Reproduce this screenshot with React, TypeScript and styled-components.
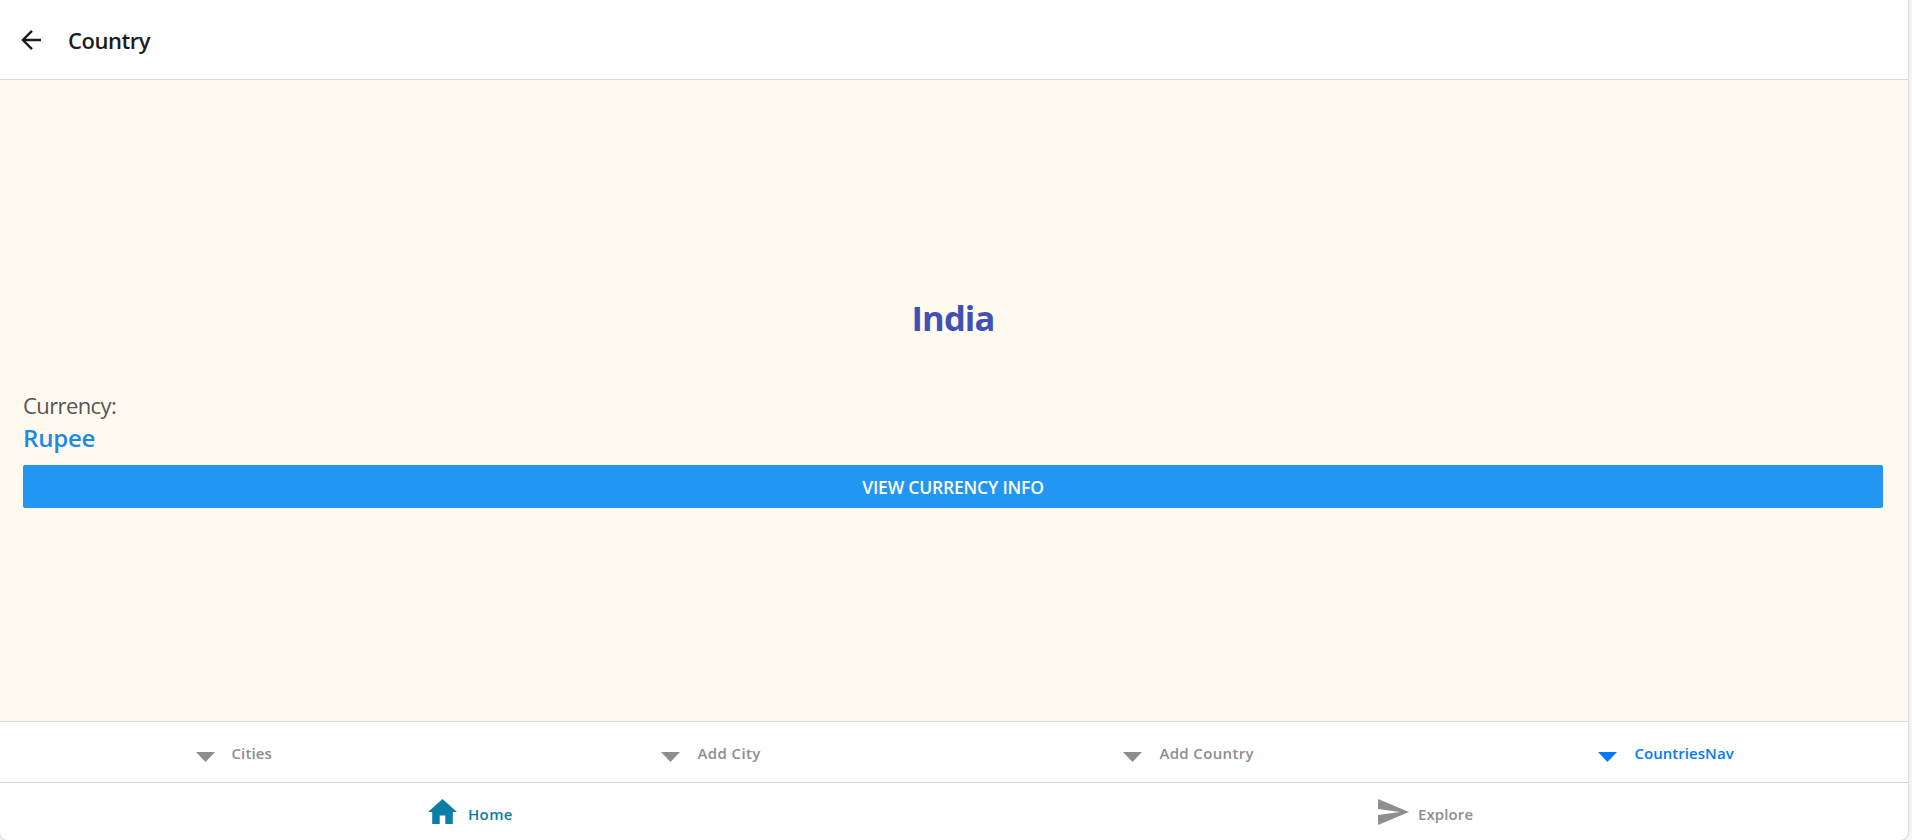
import React from "react";
import styled, { createGlobalStyle } from "styled-components";

const GlobalStyle = createGlobalStyle`
  * { box-sizing: border-box; }
  body { margin: 0; background: #f6f6f6; font-family: "Open Sans", "Noto Sans", sans-serif; overflow: hidden; }
`;

const Page = styled.div`
  display: flex;
  flex-direction: column;
  width: 1908px;
  height: 840px;
  background: #fff;
  border-radius: 0 0 8px 8px;
  box-shadow: 0 0 3px rgba(0, 0, 0, 0.25);
  overflow: hidden;
`;

const Header = styled.header`
  display: flex;
  align-items: center;
  height: 80px;
  padding-left: 19px;
  border-bottom: 1px solid #d8d8d8;
`;

const BackButton = styled.button`
  display: flex;
  width: 24px;
  height: 24px;
  margin: 1px 25px 0 0;
  padding: 0;
  border: 0;
  background: none;
  color: #1c1c1e;
`;

const Title = styled.h1`
  margin: 1px 0 0;
  font-size: 22px;
  line-height: 30px;
  font-weight: 600;
  letter-spacing: -0.45px;
  color: #1c1c1e;
`;

const Content = styled.main`
  display: flex;
  flex-direction: column;
  height: 641px;
  padding: 214px 25px 0 23px;
  background: #fffaf0;
`;

const CountryName = styled.h2`
  margin: 0 0 47px;
  font-size: 34.5px;
  line-height: 48px;
  font-weight: 700;
  letter-spacing: -0.9px;
  text-align: center;
  color: #3f51b5;
`;

const Caption = styled.div`
  height: 32px;
  font-size: 22px;
  line-height: 32px;
  letter-spacing: -0.6px;
  color: #555;
`;

const Currency = styled.div`
  height: 32px;
  font-size: 24px;
  line-height: 33px;
  font-weight: 600;
  letter-spacing: -0.2px;
  color: #1e88e5;
`;

const ActionButton = styled.button`
  height: 43px;
  margin-top: 12px;
  padding: 1px 0 0;
  border: 0;
  border-radius: 2px;
  background: #2196f3;
  color: #fff;
  font: 600 17.5px/42px "Open Sans", "Noto Sans", sans-serif;
  letter-spacing: -0.2px;
`;

const TabBar = styled.nav<{ $height: number; $columns: number }>`
  display: grid;
  grid-template-columns: repeat(${(p) => p.$columns}, 1fr);
  height: ${(p) => p.$height}px;
  border-top: 1px solid #d8d8d8;
`;

const Tab = styled.a<{ $color: string; $start: number }>`
  display: flex;
  align-items: center;
  padding-left: ${(p) => p.$start}px;
  color: ${(p) => p.$color};
`;

const Icon = styled.svg<{ $top?: number }>`
  display: block;
  flex: none;
  margin-top: ${(p) => p.$top ?? 0}px;
  fill: currentColor;
`;

const Label = styled.span<{ $gap: number; $spacing?: number; $top?: number }>`
  margin: ${(p) => p.$top ?? 4}px 0 0 ${(p) => p.$gap}px;
  font-size: 15px;
  line-height: 20px;
  font-weight: 600;
  letter-spacing: ${(p) => p.$spacing ?? 0}px;
  white-space: nowrap;
`;

const countryTabs = [
  { name: "Cities", color: "#8e8e8f", start: 195.5, spacing: 0.1 },
  { name: "Add City", color: "#8e8e8f", start: 184.4, spacing: 0.4 },
  { name: "Add Country", color: "#8e8e8f", start: 169.4, spacing: 0.35 },
  { name: "CountriesNav", color: "#007aff", start: 167.4, spacing: 0.05 },
];

export default function App() {
  return (
    <>
      <GlobalStyle />
      <Page>
        <Header>
          <BackButton aria-label="Back">
            <Icon width="24" height="24" viewBox="0 0 24 24">
              <path
                d="M22 12H4.4M13 2.9L3.9 12l9.1 9.1"
                fill="none"
                stroke="currentColor"
                strokeWidth="2.4"
              />
            </Icon>
          </BackButton>
          <Title>Country</Title>
        </Header>
        <Content>
          <CountryName>India</CountryName>
          <Caption>Currency:</Caption>
          <Currency>Rupee</Currency>
          <ActionButton>VIEW CURRENCY INFO</ActionButton>
        </Content>
        <TabBar $height={61} $columns={4}>
          {countryTabs.map((tab) => (
            <Tab key={tab.name} $color={tab.color} $start={tab.start}>
              <Icon width="19" height="10" viewBox="0 0 19 10" $top={10}>
                <path d="M0 0H19L9.5 10Z" />
              </Icon>
              <Label $gap={17} $top={2} $spacing={tab.spacing}>
                {tab.name}
              </Label>
            </Tab>
          ))}
        </TabBar>
        <TabBar $height={58} $columns={2}>
          <Tab $color="#0a7ea4" $start={428}>
            <Icon width="29" height="25" viewBox="0 0 29 25" $top={0}>
              <path d="M4.2 25V13H0L14.5 0L29 13H24.8V25H17.3V16.4H11.7V25Z" />
            </Icon>
            <Label $gap={11} $spacing={0.35}>
              Home
            </Label>
          </Tab>
          <Tab $color="#8e8e8f" $start={424}>
            <Icon width="31" height="26" viewBox="0 0 31 26" $top={1}>
              <path d="M0 0L31 13L0 26V15.9L22 13L0 10.1Z" />
            </Icon>
            <Label $gap={9} $spacing={0.1}>
              Explore
            </Label>
          </Tab>
        </TabBar>
      </Page>
    </>
  );
}
